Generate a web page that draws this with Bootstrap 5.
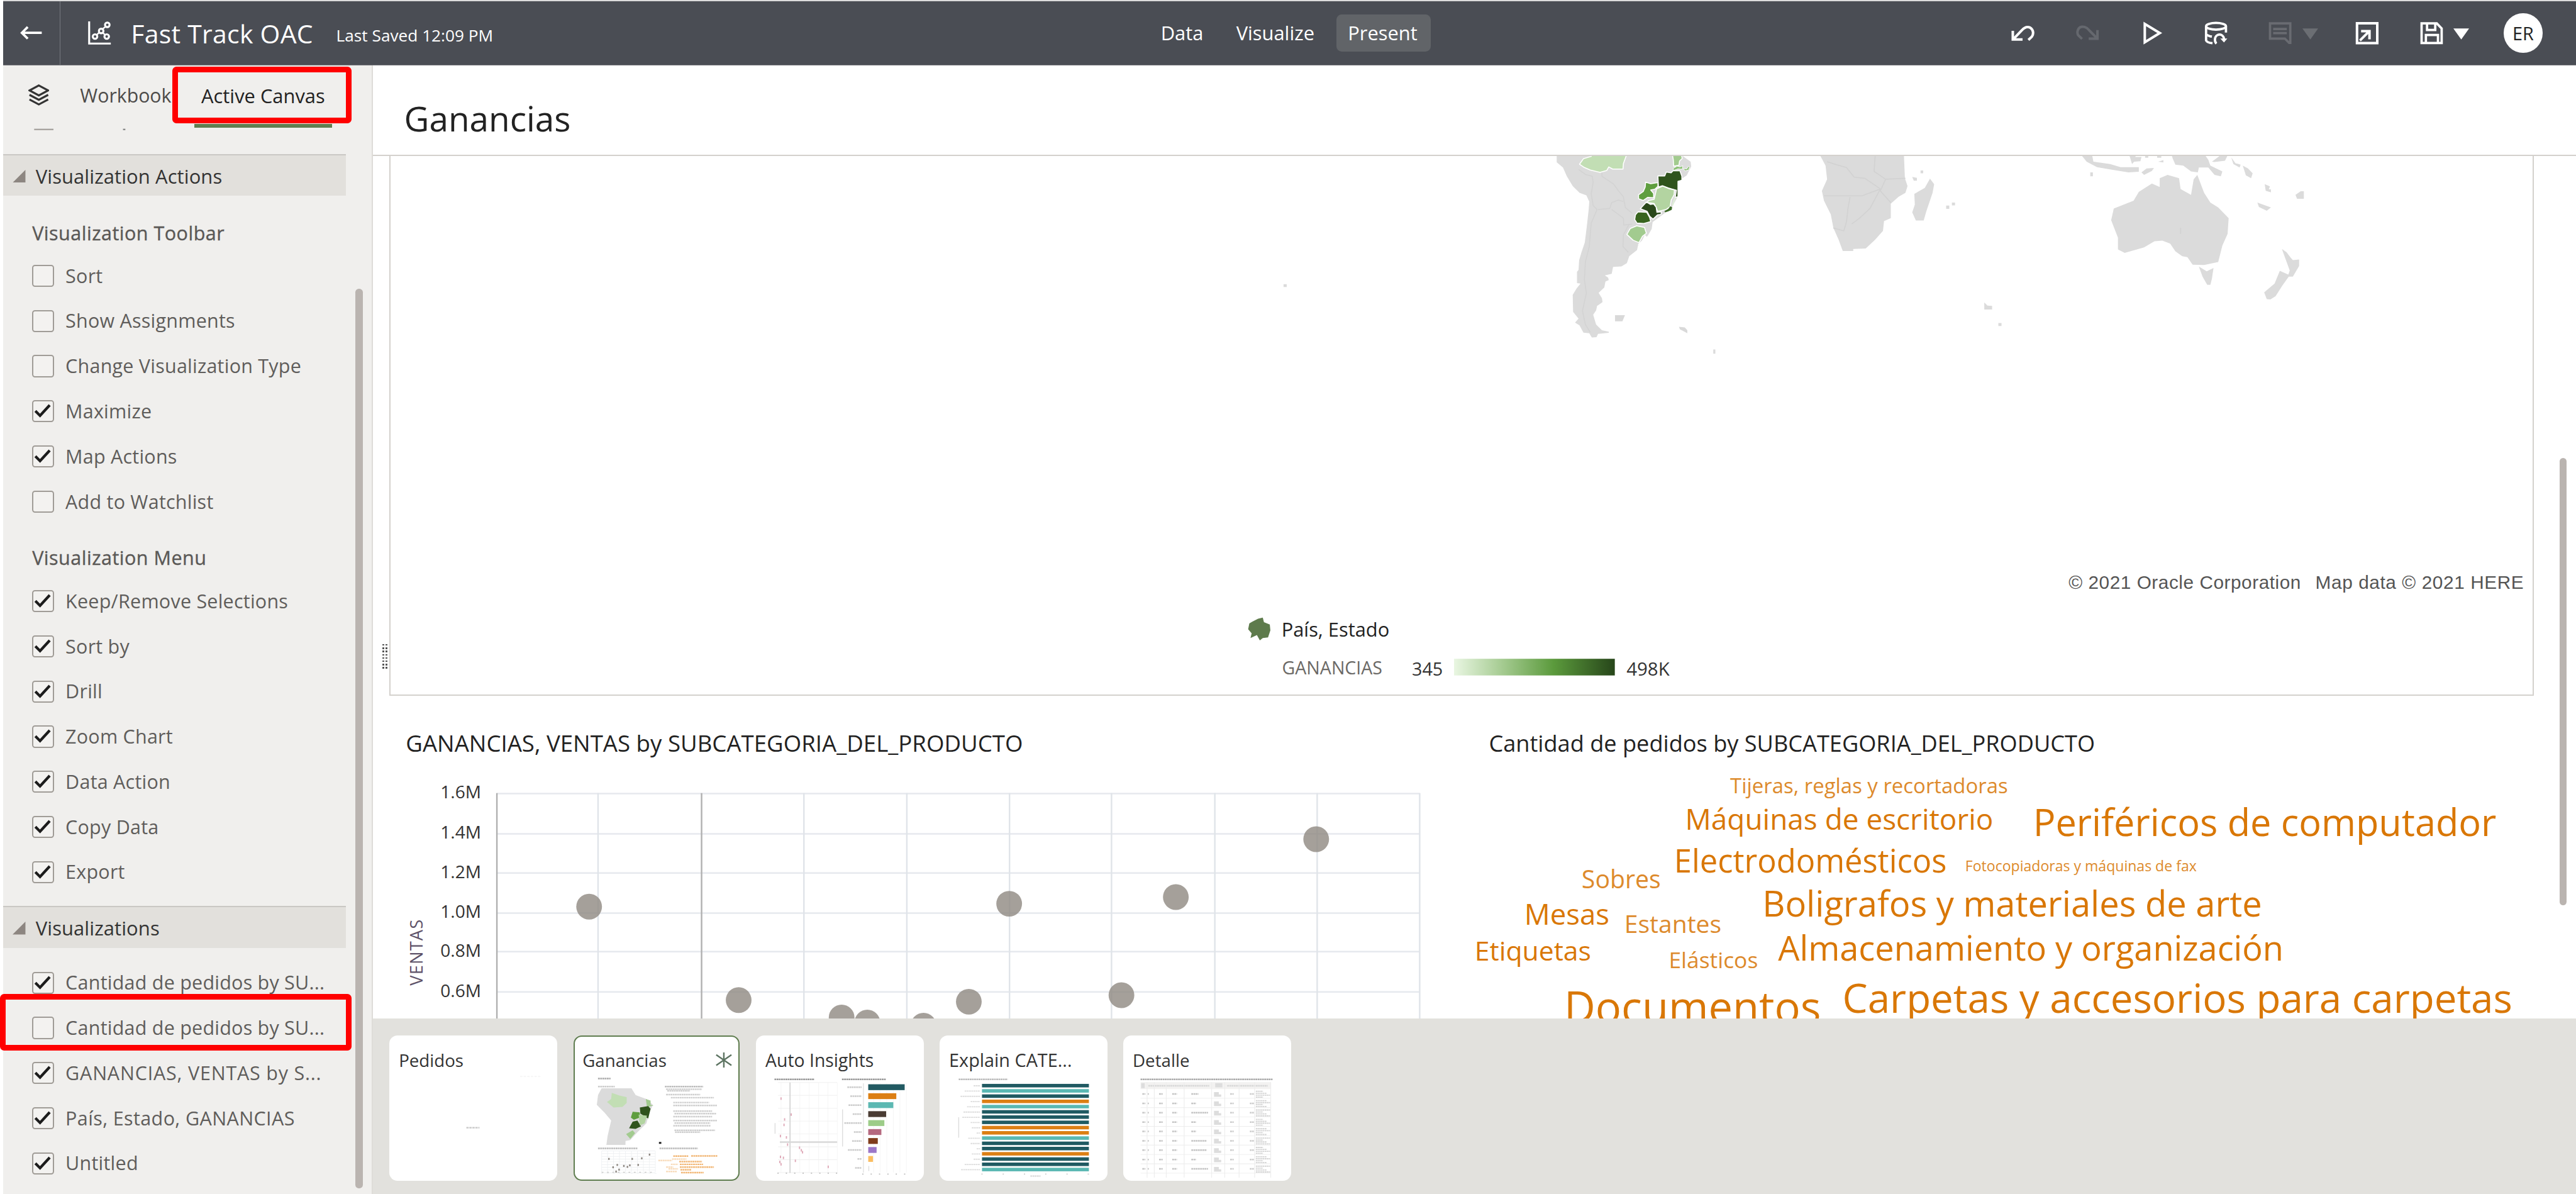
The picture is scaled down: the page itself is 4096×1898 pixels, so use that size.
<!DOCTYPE html>
<html lang="en">
<head>
<meta charset="utf-8">
<title>Fast Track OAC</title>
<link href="https://cdn.jsdelivr.net/npm/bootstrap@5.3.0/dist/css/bootstrap.min.css" rel="stylesheet">
<script src="https://cdn.jsdelivr.net/npm/bootstrap@5.3.0/dist/js/bootstrap.bundle.min.js"></script>
<style>
html,body{overflow:hidden;background:#fff}
body{font-family:"Open Sans","Noto Sans",sans-serif;color:#222}
svg{display:block;flex:none}
svg text{font-family:"Open Sans","Noto Sans",sans-serif}
.app{width:4405px;height:2041px;zoom:.92986;overflow:hidden}
.topbar{height:112px;margin-left:5px;background:#4a4d54;color:#fff;border-top:3px solid #dcdcdc;flex:none;border-bottom:2px solid #73757a}
.backbtn{width:98px;height:100%;border-right:2px solid #777a80;padding-left:29px}
.wbname{font-size:44px;line-height:60px;margin-left:33px;letter-spacing:.3px;width:312px;white-space:nowrap;padding-top:2px}
.saved{font-size:28.2px;line-height:40px;margin-left:39px;padding-top:9px;width:276px;white-space:nowrap}
.modes{margin-left:1134px;font-size:33.2px;line-height:64px}
.modes .on{background:#616468;border-radius:9px;padding:0 20px;width:162px}
.avatar{width:67px;height:67px;border-radius:50%;background:#fff;color:#222;font-size:31px}
.side{width:633px;margin-left:5px;background:#f0efed;border-right:3px solid #dedcd8;flex:none;font-size:32.8px;color:#5f5d5b;position:relative}
.tabs{height:106px}
.tabs .t1{margin-left:53px;color:#4d4b49;font-size:32.5px;line-height:104px;width:160px;white-space:nowrap}
.tabs .t2{margin-left:35px;width:236px;text-align:center;color:#222;border-bottom:7px solid #5f7d4f;height:106px;line-height:104px;font-size:33.2px;white-space:nowrap}
.sect{width:587px;height:72px;background:#e2e0dc;border-top:3px solid #cac8c4;color:#333;font-size:33.3px;padding:2px 0 0 17px;flex:none;letter-spacing:.1px}
.subhead{height:98px;padding:41px 0 0 50px;line-height:44px;font-size:32.8px;font-weight:500;color:#5a5856;-webkit-text-stroke:.4px #5a5856;letter-spacing:.55px}
.subhead.s2{height:93px;padding-top:35px}
.opt{height:77.2px;padding-left:50px;white-space:nowrap;letter-spacing:.25px}
.cbx{width:38px;height:38px;border:2.6px solid #a09c97;border-radius:5px;margin-right:19px;flex:none;background:#f3f2f0}
.sidebarscroll{position:absolute;left:603px;top:382px;width:12px;height:1538px;border-radius:6px;background:#bab4b0}
.redbox{position:absolute;border:10px solid #f00;border-radius:7px;z-index:3}
.rb1{left:290px;top:2px;width:306px;height:97px}
.rb2{left:-5px;top:1587px;width:601px;height:97px}
.main{flex:1;position:relative}
.titlebar{height:155px;border-bottom:3px solid #d4d1cd;flex:none;font-size:59px;line-height:80px;padding:50px 0 0 53px;color:#222}
.viewport{height:1474px;overflow:hidden;padding-left:28px}
.mapcard{width:3667px;height:922px;border:2.5px solid #d4d1cd;border-top:0}
.canvasscroll{position:absolute;left:3739px;top:671px;width:12px;height:765px;border-radius:6px;background:#bab4b0}
.grip{position:absolute;left:16px;top:989px;width:9px;height:44px;background:repeating-linear-gradient(#555 0 2.6px,transparent 2.6px 5.6px);-webkit-mask:linear-gradient(90deg,#000 0 3.5px,transparent 3.5px 5.5px,#000 5.5px)}
.charttitle{font-size:39.4px;line-height:56px;padding-top:53px;white-space:nowrap;color:#222;height:122px}
.ct1{padding-left:28px;width:1852px}
.ct2{padding-left:28px;font-size:38.9px}
.strip{flex:1;background:#e2e1dd;padding:29px 0 0 28px;gap:27px}
.thumb{width:287px;height:249px;border-radius:14px;background:#fff;font-size:29.8px;color:#333;overflow:hidden}
.thumb.on{border:3px solid #5f7d4f;width:284px;margin:0 1px 0 1px}
.thumb .nm{height:68px;line-height:44px;padding:21px 0 0 16px;white-space:nowrap}
.thumb.on .nm{margin:-3px 0 0 -3px}
.thumb.on svg.pic{margin-left:-3px}
</style>
</head>
<body>
<div class="app d-flex flex-column">
<header class="topbar d-flex align-items-center">
 <div class="backbtn d-flex align-items-center"><svg width="38" height="24" viewBox="0 0 38 24" fill="none" stroke="#fff" stroke-width="4"><path d="M37 12H4M13 2L3 12l10 10"/></svg></div>
 <svg style="margin-left:46px" width="42" height="42" viewBox="0 0 42 42" fill="none" stroke="#fff" stroke-width="3.400"><path d="M3 1v38h37"/><circle cx="13" cy="27" r="3.900"/><circle cx="23.500" cy="17.500" r="3.900"/><circle cx="34" cy="7" r="3.900"/><circle cx="33" cy="27" r="3.900"/><path d="M26 14l5-4M16 24l4-4M26.500 20.500l3.500 3.500" stroke-width="2.500"/></svg>
 <div class="wbname">Fast Track OAC</div>
 <div class="saved">Last Saved 12:09 PM</div>
 <nav class="modes d-flex"><span style="width:129px">Data</span><span style="width:171px">Visualize</span><span class="on">Present</span></nav>
 <div class="d-flex align-items-center ms-auto" style="margin-right:57px">
  <svg width="40" height="40" viewBox="58 78 120 120" fill="none" stroke="#fff" stroke-width="13"><path d="M66 126v45h50M70 168L112 124C126 108 142 104 155 110C172 120 174 142 164 156L146 173"/></svg>
  <svg style="margin-left:71px" width="40" height="40" viewBox="390 78 120 120" fill="none" stroke="#65686e" stroke-width="13"><path d="M500 122v45h-45M498 165L456 122C444 106 424 102 411 108C396 118 394 138 402 150L421 168"/></svg>
  <svg style="margin-left:73px" width="40" height="40" viewBox="730 78 120 120" fill="none" stroke="#fff" stroke-width="13"><path d="M744 91v94L821 138z"/></svg>
  <svg style="margin-left:66px" width="40" height="40" viewBox="1048 78 120 120" fill="none" stroke="#fff" stroke-width="12"><ellipse cx="1108" cy="103" rx="51" ry="17"/><path d="M1057 103v72c3 8 15 13 33 15M1159 103v32M1060 146c7 6 15 8 27 10M1110 192c-12-12-10-38 8-45c18-5 30 6 31 22"/><path d="M1130 166h36l-17 20z" fill="#fff" stroke="none"/></svg>
  <svg style="margin-left:70px" width="40" height="40" viewBox="1378 78 120 120" fill="none" stroke="#696b71" stroke-width="12"><path d="M1386 88h104v100h-6l-22-22h-76zM1402 117h70M1402 138h70"/></svg>
  <svg style="margin-left:18px" width="27" height="40" viewBox="0 0 27 40"><path d="M0 12h27L13.500 31z" fill="#6b6e73"/></svg>
  <svg style="margin-left:63px" width="40" height="40" viewBox="262 78 120 120" fill="none" stroke="#fff" stroke-width="13"><path d="M271 88h104v101H271zM292 128h43v42M332 130L286 176"/></svg>
  <svg style="margin-left:71px" width="40" height="40" viewBox="594 78 120 120" fill="none" stroke="#fff" stroke-width="12"><path d="M602 88h78l25 26v75H602zM630 90v32h42V90M624 186v-38h62v38"/></svg>
  <svg style="margin-left:17px" width="27" height="40" viewBox="0 0 27 40"><path d="M0 12h27L13.500 31z" fill="#fff"/></svg>
  <div class="avatar d-flex align-items-center justify-content-center" style="margin-left:59px">ER</div>
 </div>
</header>
<div class="d-flex flex-grow-1">
 <aside class="side">
  <div class="tabs d-flex">
   <svg style="margin:32px 0 0 43px" width="36" height="37" viewBox="0 0 36 37" fill="none" stroke="#333" stroke-width="3.400"><path d="M18 2L34 10.500 18 19 2 10.500zM2 18l16 8.500L34 18M2 26l16 8.500L34 26"/></svg>
   <div class="t1">Workbook</div><div class="t2">Active Canvas</div>
  </div>
  <svg width="300" height="45" viewBox="0 0 300 45"><path d="M53 3h33" stroke="#a7a39f" stroke-width="2.500"/><path d="M205 3h4" stroke="#888" stroke-width="2.500"/></svg>
  <div class="sect d-flex align-items-center"><svg width="22" height="22" viewBox="0 0 22 22"><path d="M22 0v22H0z" fill="#8d8681"/></svg><span style="margin-left:17px">Visualization Actions</span></div>
  <div class="subhead">Visualization Toolbar</div>
  <div id="g1"></div>
  <div class="subhead s2">Visualization Menu</div>
  <div id="g2"></div>
  <div class="sect d-flex align-items-center" style="margin:19px 0 21px">
  <svg width="22" height="22" viewBox="0 0 22 22"><path d="M22 0v22H0z" fill="#8d8681"/></svg><span style="margin-left:17px">Visualizations</span></div>
  <div id="g3"></div>
  <div class="sidebarscroll"></div>
  <div class="redbox rb1"></div><div class="redbox rb2"></div>
 </aside>
 <main class="main d-flex flex-column">
  <div class="titlebar">Ganancias</div>
  <div class="viewport">
   <div class="mapcard">
   <svg width="3662" height="919" viewBox="668.500 267 3662 919">
    <g transform="translate(2640 255) scale(.33333)" stroke-linejoin="round">
     <path fill="#dbdbdb" d="M68 28V68L100 95 120 140 150 190 185 225 220 238 235 270 232 310 222 400 212 480 195 530 183 570 180 620 172 630V688L190 690 170 715 150 748 152 835 180 870 162 890 185 905 205 942 235 945 248 967 272 965 280 948 335 943V937L300 930 270 900 255 850 270 828 275 805 303 785 300 765 283 738 312 710 318 680 335 672 332 660 315 648 350 640 357 605 400 602 428 585 440 550 480 518 485 495 510 470 535 445 555 410 560 375 600 345 655 305 680 260 690 240V165L735 135 758 90 755 65 720 40 700 28Z"/>
     <path fill="none" stroke="#d3d3d3" stroke-width="5" d="M180 105L215 130 250 140 255 170 245 230 255 290 275 310 245 380 235 500 215 580 210 670 220 740 200 830 215 900 240 940M300 120V140L360 180 385 215 410 245 420 300 455 330M280 310L340 305 350 275 385 262 410 270M350 310L410 355 412 390 455 385M440 385L410 440 408 500 435 530"/>
     <path fill="#fff" d="M500 500L530 450 520 440 505 470 485 488 488 505z"/>
     <g stroke="#fff" stroke-width="5">
      <path fill="#c2deb4" d="M240 20H430L410 75 408 103H355L335 92 325 110 290 120 240 108 210 95 185 78 205 50 245 38z"/>
      <path fill="#a2cb8f" d="M660 20H705L712 48 698 62 695 84 668 88 666 55z"/>
      <path fill="#8dc077" stroke-width="3" d="M665 100L685 88 700 92 715 86 712 104 690 102 668 110zM718 100L735 102 745 88 750 92 745 108 725 112z"/>
      <path fill="#30541d" d="M587 138H622L630 118 655 122 665 112 700 112 710 140V160L690 166V245L676 248 682 212 640 200 610 188 590 195z"/>
      <path fill="#5f9e3f" d="M524 170L550 178 587 172V192L572 206 550 210 565 228 565 250 535 248 512 264 488 255V235L512 218 522 195z"/>
      <path fill="#b3d4a1" d="M580 205L612 190 645 204 672 210 670 235 655 262 650 295 630 310 587 320 568 280 530 274 540 264 568 258z"/>
      <path fill="#38641f" d="M485 322L530 325 545 352 550 372 515 382 480 380 468 362 472 338z"/>
      <path fill="#2a481a" d="M497 306L528 272 548 284 565 282 578 298 582 325 605 322 603 335 585 338 562 360 545 345 532 320z"/>
      <path fill="#a2cb8f" d="M428 438L445 408 478 394 518 402 528 432 508 448 490 480 460 468z"/>
     </g>
     <path fill="#3d6a28" d="M620 318L640 308 650 294 660 298 658 312 640 320 625 325z"/>
     <path fill="#e0f0d8" d="M672 248L678 254 665 290 658 290z"/>
     <path fill="#d9d9d9" d="M367 852H418L405 884H367zM695 912L725 915 738 930V945L722 936 700 925z"/>
    </g>
    <g transform="translate(2600 240) scale(.8929 .33333)" fill="#dbdbdb">
     <path d="M573 70L585 130 588 200 578 260 582 310 595 380 600 450 610 510 618 568H638V558L662 555 680 510 695 465 697 415 710 400V325L725 290 738 270 742 235 737 195 735 70zM785 197L793 225 790 270 778 365 773 412H758L751 370 756 330 755 275 775 245zM767 155h5v15h-5zM751 188l9 5v15h-6zM816 335h6v17h-6zM827 320h6v14h-6z"/>
     <path d="M1073 70H1095L1098 110 1130 122 1150 138 1185 138V162L1165 165 1135 152 1105 138 1085 110zM1190 165L1200 145 1214 142 1210 158 1195 178zM1166 70H1182L1178 86H1190L1188 108 1176 110 1172 122zM1197 75h6v15h-6zM1220 70h8v20h-8zM1222 110l10-8v12zM1247 70H1310L1318 100 1322 130 1345 160 1342 185 1330 178 1318 140 1300 140 1298 165 1285 160 1270 130 1255 125 1250 95zM1325 110L1345 70 1355 78 1350 105 1330 112zM1362 88L1370 118 1380 125 1378 140 1366 122zM1384 130L1394 145 1403 170 1400 195 1390 180zM1092 165h5v20h-5zM1426 225l10 12-2 15h4v15l-10-8zM1412 320L1438 345 1430 362 1415 342zM1485 280L1495 262 1501 262V300H1488z"/>
     <path d="M1240 178L1262 195 1265 250 1285 280 1290 200 1297 178 1310 270 1322 320 1337 345 1357 400 1355 480 1345 540 1337 625 1310 640 1288 638 1278 600 1268 595 1255 570 1245 530 1230 515 1215 518 1195 550 1158 578 1145 560V500L1132 410 1137 350 1175 310 1185 265 1210 222 1225 240V195zM1300 648L1315 672 1328 655 1325 710 1322 742H1316L1307 700zM1459 558L1468 575 1475 600 1480 615 1492 612V645L1480 700 1470 700 1474 668 1462 580zM1455 670L1474 692 1460 745 1447 800 1437 817 1430 815 1425 780 1445 735z"/>
     <path d="M889 832L895 848 904 850V868H889zM916 938h6v15h-6zM370 1073h4v22h-4zM-453 738h6v15h-6z"/>
     <path fill="none" stroke="#d2d2d2" stroke-width="1.800" vector-effect="non-scaling-stroke" d="M588 110L605 125 625 140 640 190 660 195 690 250 670 350 650 400 635 430M582 285H655L690 250M632 290L628 350 625 420 620 465 600 450M680 80L678 160 700 200 738 195M700 200L690 260 710 320M1265 450v30"/>
    </g>
    <path fill="#5e7b4c" d="M2142 1063L2152 1058 2160 1056 2162 1064 2172 1068 2173 1078 2169 1090 2160 1091 2155 1095 2150 1086 2139 1091 2141 1083 2135 1076 2137 1066z"/>
    <defs><linearGradient id="gr"><stop offset="0" stop-color="#e9f6e2"/><stop offset=".3" stop-color="#a5cb91"/><stop offset=".62" stop-color="#5b9a3c"/><stop offset="1" stop-color="#27461a"/></linearGradient></defs>
    <rect x="2487" y="1126.500" width="275" height="28.500" fill="url(#gr)"/>
    <g style="font-size:32px" fill="#555"><text x="3538" y="1007" textLength="397" style="font-family:'Liberation Sans',sans-serif">© 2021 Oracle Corporation</text><text x="3960" y="1007" textLength="356" style="font-family:'Liberation Sans',sans-serif">Map data © 2021 HERE</text></g>
    <text x="2192" y="1089" font-size="33.200" fill="#222">País, Estado</text>
    <text x="2193" y="1153.500" font-size="30.700" fill="#6b6966">GANANCIAS</text>
    <text x="2415" y="1155" font-size="30.900" fill="#333">345</text>
    <text x="2782" y="1155" font-size="31.600" fill="#333">498K</text>
   </svg>
   </div>
   <div class="d-flex">
    <section style="width:1852px">
     <div class="charttitle ct1">GANANCIAS, VENTAS by SUBCATEGORIA_DEL_PRODUCTO</div>
     <svg id="scatter" width="1852" height="431" viewBox="666 1311 1852 431"></svg>
    </section>
    <section>
     <div class="charttitle ct2">Cantidad de pedidos by SUBCATEGORIA_DEL_PRODUCTO</div>
     <svg id="cloud" width="1815" height="431" viewBox="2518 1311 1815 431" fill="#d97706"></svg>
    </section>
   </div>
  </div>
  <div class="strip d-flex">
   <div class="thumb"><div class="nm">Pedidos</div><svg class="pic" width="287" height="180" viewBox="26 324 281 540" preserveAspectRatio="none"><path d="M155 594h22" stroke="#c8c8c8" stroke-width="7" stroke-dasharray="4 1"/><path d="M245 331h35" stroke="#f3f3f3" stroke-width="4" stroke-dasharray="4 2"/></svg></div>
   <div class="thumb on"><div class="nm d-flex justify-content-between"><span>Ganancias</span><svg style="margin:8px 10px 0 0" width="30" height="28" viewBox="0 0 30 28" stroke="#5d7462" stroke-width="2.600"><path d="M15 1v26M2 5l26 18M28 5L2 23"/></svg></div><svg class="pic" id="t2" width="287" height="180" viewBox="332 324 281 540" preserveAspectRatio="none"></svg></div>
   <div class="thumb"><div class="nm" style="font-size:30.500px">Auto Insights</div><svg class="pic" id="t3" width="287" height="180" viewBox="640 324 281 540" preserveAspectRatio="none"></svg></div>
   <div class="thumb"><div class="nm" style="font-size:31px">Explain CATE...</div><svg class="pic" id="t4" width="287" height="180" viewBox="948 324 281 540" preserveAspectRatio="none"></svg></div>
   <div class="thumb"><div class="nm">Detalle</div><svg class="pic" id="t5" width="287" height="180" viewBox="1256 324 281 540" preserveAspectRatio="none"></svg></div>
  </div>
  <div class="canvasscroll"></div><div class="grip"></div>
 </main>
</div>
</div>
<script>
const $=id=>document.getElementById(id);
const tick='<svg width="33" height="33" viewBox="0 0 33 33" fill="none" stroke="#1c1c1c" stroke-width="4.600"><path d="M3.500 16.500L11.500 24.500 28 6.500"/></svg>';
function opts(id,list){$(id).innerHTML=list.map(([c,t,k])=>`<div class="opt d-flex align-items-center"><span class="cbx">${c?tick:''}</span><span${k?` style="letter-spacing:${k}px"`:''}>${t}</span></div>`).join('')}
opts('g1',[[0,'Sort'],[0,'Show Assignments'],[0,'Change Visualization Type'],[1,'Maximize'],[1,'Map Actions'],[0,'Add to Watchlist']]);
opts('g2',[[1,'Keep/Remove Selections'],[1,'Sort by'],[1,'Drill'],[1,'Zoom Chart'],[1,'Data Action'],[1,'Copy Data'],[1,'Export']]);
opts('g3',[[1,'Cantidad de pedidos by SU...'],[0,'Cantidad de pedidos by SU...'],[1,'GANANCIAS, VENTAS by S...',.85],[1,'País, Estado, GANANCIAS',.42],[1,'Untitled']]);

// scatter plot
let s='';
[1356.7,1425.6,1492.4,1561,1627,1695.8].forEach((y,i)=>{s+=`<path d="M850 ${y}H2428" stroke="#e6e9ee" stroke-width="2.600"/><text x="823" y="${y+8.500}" text-anchor="end" font-size="30.200" fill="#333">${(1.6-i*.2).toFixed(1)}M</text>`});
[1023,1375,1551,1726.6,1901,2077.7,2252.7,2428].forEach(x=>s+=`<path d="M${x} 1356V1742" stroke="#e0e4e9" stroke-width="2.600"/>`);
[850,1200].forEach(x=>s+=`<path d="M${x} 1356V1742" stroke="#b0b0b0" stroke-width="2.600"/>`);
[[1007.7,1550],[1263.4,1709.7],[1439.5,1739.5],[1483.4,1748],[1579.5,1753.5],[1657,1712.5],[1726,1545],[1918,1701.4],[2011,1533.6],[2251,1434.7]].forEach(([x,y])=>s+=`<circle cx="${x}" cy="${y}" r="22" fill="#8f8881" fill-opacity=".8"/>`);
s+='<text transform="translate(723 1685) rotate(-90)" font-size="29.500" textLength="113" fill="#5d5268">VENTAS</text>';
$('scatter').innerHTML=s;

// tag cloud: text, left, baseline, size
$('cloud').innerHTML=[['Tijeras, reglas y recortadoras',2959,1356.5,35.4],['Máquinas de escritorio',2882,1418.5,49.4],['Periféricos de computador',3477,1429.5,63.9],['Electrodomésticos',2863,1492,54.5],['Fotocopiadoras y máquinas de fax',3361,1489.5,24.8],['Sobres',2705,1519,42.2],['Mesas',2607,1581,49],['Estantes',2778,1595,42],['Boligrafos y materiales de arte',3014,1567.5,60.3],['Etiquetas',2522,1642.5,45.9],['Elásticos',2854,1655,38.1],['Almacenamiento y organización',3041,1642.5,58.2],['Carpetas y accesorios para carpetas',3151,1732,68.5],['Documentos',2675,1749,73.8]].map(([t,x,y,f])=>`<text x="${x}" y="${y}" font-size="${f}"${f<45?' fill="#dd8a2c"':''}>${t}</text>`).join('');

// thumbnails
const ln=(x1,x2,y,c='#bbb',w=8)=>`<path d="M${x1} ${y}H${x2}" stroke="${c}" stroke-width="${w}" stroke-dasharray="3 .7"/>`;
let a=ln(374,395,345,'#aaa')+ln(374,402,386,'#ccc')+ln(486,550,386,'#bbb')
+'<path fill="#dbdbdb" d="M380 395H430L437 430 455 450 466 480 460 520 455 575 440 620 428 660 420 665V685H388L390 640 396 560 385 520 372 480 374 430z"/><path fill="#c2deb4" d="M397 418L410 432 422 440V470L415 490 400 493 389 465 396 450z"/><path fill="#a2cb8f" d="M454 450L462 458V480L467 484 456 490zM421 630L432 610 436 625 428 655z"/><path fill="#30541d" d="M444 493L458 486 462 500 458 550 445 525zM432 566L440 560 446 590 437 603 426 600z"/><path fill="#5f9e3f" d="M432 515L444 518V545L434 556 429 545z"/><path fill="#b3d4a1" d="M442 530L456 535 452 575 444 585z"/><path d="M476 675h4" stroke="#222" stroke-width="10"/>';
[[488,548,400],[490,528,408],[488,545,427],[496,568,443],[500,560,468],[500,573,483],[500,565,512],[502,572,525],[500,565,540],[500,573,560],[502,562,573],[500,563,587],[502,570,610],[503,545,620]].forEach(v=>a+=ln(v[0],v[1],v[2],'#cfcfcf'));
a+=ln(374,440,703)+ln(477,541,703);
for(let x=380;x<475;x+=10)a+=`<path d="M${x} 716V826M${x-1} 832h3" stroke="#e9ecef" stroke-width="1"/>`;
for(let y=716;y<830;y+=14)a+=`<path d="M380 ${y}H470" stroke="#eef0f2" stroke-width="3"/>`;
a+='<path d="M380 826H470" stroke="#ccc" stroke-width="5" stroke-dasharray="3 6"/>';
[[392,757],[431,757],[447,754],[460,735],[399,800],[406,788],[417,793],[427,790],[423,798],[441,788],[409,812],[404,822]].forEach(p=>a+=`<rect x="${p[0]-1}" y="${p[1]-5}" width="2.500" height="10" fill="#8d8781"/>`);
[[500,525,743],[530,574,742],[475,498,765],[498,522,758],[510,548,771],[496,508,785],[511,550,785],[488,500,799],[511,568,799],[492,508,808],[512,530,813],[488,506,822],[513,551,827]].forEach(v=>a+=ln(v[0],v[1],v[2],v[0]<500?'#f8dcbc':'#f2b878'));
$('t2').innerHTML=a;

let b=ln(671,738,346,'#999')+ln(784,858,346,'#999');
for(let x=682;x<780;x+=15.7)b+=`<path d="M${x} 362V826" stroke="#f0f0f0" stroke-width="1"/>`;
for(let y=362;y<830;y+=66)b+=`<path d="M677 ${y}H776" stroke="#f0f0f0" stroke-width="3"/>`;
b+='<path d="M697 362V826" stroke="#ccc" stroke-width="1.500"/><path d="M680 668H776" stroke="#d8d8d8" stroke-width="8"/><path d="M676 827H776M818 832H892" stroke="#bbb" stroke-width="6" stroke-dasharray="2 12"/><path d="M672 570V625M785 500V690" stroke="#ddd" stroke-width="1.500"/><path d="M820 366V824" stroke="#ddd" stroke-width="1.200"/>';
for(let x=837;x<895;x+=11)b+=`<path d="M${x} 366V824" stroke="#f1f1f1" stroke-width="1"/>`;
[[682,445],[699,527],[688,552],[687,580],[681,637],[691,644],[693,681],[713,697],[716,710],[718,720],[681,744],[686,749],[706,764],[680,770],[682,782],[761,795]].forEach(p=>b+=`<rect x="${p[0]-1}" y="${p[1]-7}" width="2" height="13" fill="#dfa9b8"/>`);
[[61,'#225a62'],[47,'#dc7f14'],[42,'#5cb8b2'],[30,'#4a3c33'],[27,'#9dcc88'],[22,'#b5697f'],[16,'#7f3c1b'],[14,'#9b76c8'],[8,'#fbbd5f']].forEach((v,i)=>b+=`<rect x="828" y="${371+i*46}" width="${v[0]}" height="30" fill="${v[1]}"/>`+ln([793,798,795,802,788,804,801,794,810][i],817,386+i*46,'#ccc'));
b+='<path d="M829 790v26" stroke="#bbb" stroke-width="1"/>'+ln(806,817,800,'#ccc');
$('t3').innerHTML=b;

let d=ln(980,1062,346,'#bbb');
'DTDOTDDDOOTDDODDT'.split('').forEach((k,i)=>d+=`<rect x="1019" y="${369+i*26.9}" width="179" height="18" fill="${{D:'#205a62',T:'#5ab8b3',O:'#dc7f14'}[k]}"/>`+ln([1005,990,983,1000,994,988,986,1000,1002,1010,996,1000,1010,1002,1005,990,984][i],1016,379+i*26.9,'#ddd',6));
d+='<path d="M980 540V645" stroke="#ddd" stroke-width="1.500"/><path d="M1018 832H1200" stroke="#ccc" stroke-width="6" stroke-dasharray="2 33.600"/>'+ln(1100,1117,842,'#ddd');
$('t4').innerHTML=d;

let e=ln(1285,1506,346,'#aaa')+'<rect x="1285" y="360" width="218" height="36" fill="#f3f2f1"/>'+ln(1298,1400,379,'#d8d8d8')+ln(1430,1498,379,'#d8d8d8')+'<path d="M1286 365h6v26h-6zM1410 365h12v22h-12z" fill="#ddd"/>';
[1296,1308,1328,1358,1404,1426,1450,1476,1503].forEach(x=>e+=`<path d="M${x} 360V850" stroke="#ededed" stroke-width="1.200"/>`);
for(let i=0;i<9;i++){const y=421+i*48;e+=`<path d="M1285 ${y+22}H1503" stroke="#ececec" stroke-width="3"/>`+ln(1288,1293,y,'#c4c4c4')+ln(1297,1299,y,'#ccc')+ln(1316,1322,y,'#c4c4c4')+ln(1338,1346,y,'#c4c4c4')+ln(1370,1370+[12,8,28,8,8,26,26,8,28][i],y,'#c4c4c4')+ln(1435,1441,y,'#ccc')+ln(1468,1475,y,'#ccc')+`<path d="M1408 ${y-10}h8v12h4v12h-12z" fill="#ddd"/>`+[-14,-4,6,16].map((k,j)=>ln(1478,1490+(i+j)%3*6,y+k,'#d3d3d3',6)).join('')}
$('t5').innerHTML=e;
</script>
</body>
</html>
